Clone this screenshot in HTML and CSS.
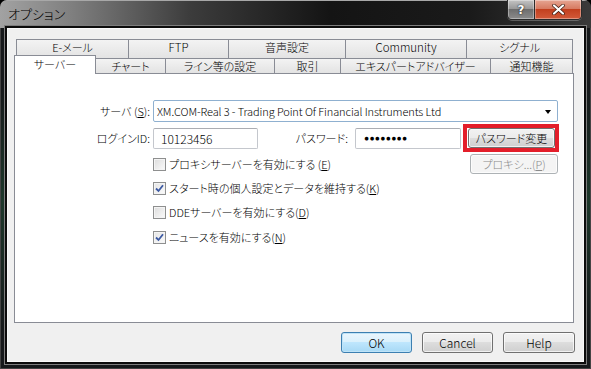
FILE: index.html
```html
<!DOCTYPE html>
<html lang="ja">

<head>
    <meta charset="UTF-8">
    <title>オプション</title>
    <link rel="stylesheet" href="styles.css">
</head>

<body>
    <div class="window">
        <div class="titlebar">
            <span class="title">オプション</span>
            <div class="caption">
                <div class="cap cap-help">?</div>
                <div class="cap cap-close">
                    <svg width="13" height="11" viewBox="0 0 13 11">
                        <path d="M2 1.5 L11 9.5 M11 1.5 L2 9.5" stroke="#3a1a10" stroke-width="3.6" stroke-linecap="round" />
                        <path d="M2 1.5 L11 9.5 M11 1.5 L2 9.5" stroke="#fff" stroke-width="2.2" stroke-linecap="round" />
                    </svg>
                </div>
            </div>
        </div>

        <div class="client">
            <div class="tabs">
                <div class="tab-row back">
                    <div class="tab" style="width:113px">E-メール</div>
                    <div class="tab latin" style="width:101px">FTP</div>
                    <div class="tab" style="width:118px">音声設定</div>
                    <div class="tab latin" style="width:122px">Community</div>
                    <div class="tab" style="width:107px">シグナル</div>
                </div>
                <div class="tab-row front">
                    <div class="tab selected" style="width:82px">サーバー</div>
                    <div class="tab" style="width:71px">チャート</div>
                    <div class="tab" style="width:110px">ライン等の設定</div>
                    <div class="tab" style="width:67px">取引</div>
                    <div class="tab" style="width:151px">エキスパートアドバイザー</div>
                    <div class="tab" style="width:83px">通知機能</div>
                </div>

                <div class="panel">
                    <div class="row row-server">
                        <label class="label-col">サーバ (<u>S</u>):</label>
                        <div class="combo">
                            <span class="server-name">XM.COM-Real 3 - Trading Point Of Financial Instruments Ltd</span>
                            <span class="arrow"></span>
                        </div>
                    </div>

                    <div class="row row-login">
                        <label class="label-col">ログインID:</label>
                        <div class="textbox login">10123456</div>
                        <label class="pw-label">パスワード:</label>
                        <div class="textbox password">●●●●●●●●</div>
                        <div class="highlight">
                            <button class="btn pw-btn">パスワード変更</button>
                        </div>
                    </div>

                    <div class="row check-row first">
                        <span class="checkbox"></span>
                        <span>プロキシサーバーを有効にする (<u>E</u>)</span>
                        <button class="btn proxy-btn" disabled>プロキシ...(<u>P</u>)</button>
                    </div>
                    <div class="row check-row">
                        <span class="checkbox checked">
                            <svg width="9" height="9" viewBox="0 0 9 9"><path d="M1 4.5 L3.5 7 L8 1.2" stroke="#3d5aa3" stroke-width="1.8" fill="none" /></svg>
                        </span>
                        <span>スタート時の個人設定とデータを維持する(<u>K</u>)</span>
                    </div>
                    <div class="row check-row">
                        <span class="checkbox"></span>
                        <span>DDEサーバーを有効にする(<u>D</u>)</span>
                    </div>
                    <div class="row check-row last">
                        <span class="checkbox checked">
                            <svg width="9" height="9" viewBox="0 0 9 9"><path d="M1 4.5 L3.5 7 L8 1.2" stroke="#3d5aa3" stroke-width="1.8" fill="none" /></svg>
                        </span>
                        <span>ニュースを有効にする(<u>N</u>)</span>
                    </div>
                </div>
            </div>

            <div class="dialog-buttons">
                <button class="btn default">OK</button>
                <button class="btn">Cancel</button>
                <button class="btn help">Help</button>
            </div>
        </div>
    </div>
</body>

</html>
```

FILE: styles.css
```css
* {
    box-sizing: border-box;
}

body {
    margin: 0;
    background: #000;
    font-family: "Noto Sans CJK JP", sans-serif;
    font-size: 11px;
    font-weight: 300;
    color: #000;
    font-feature-settings: "palt";
}

.latin {
    font-size: 11.5px;
}

.window {
    width: 591px;
    height: 369px;
    border-radius: 7px 7px 0 0;
    overflow: hidden;
    background:
        linear-gradient(180deg, rgba(40, 90, 60, 0) 90px, rgba(40, 110, 70, 0.35) 200px, rgba(40, 90, 60, 0) 330px),
        #16191b;
    box-shadow: inset 0 0 0 1px #444;
}

/* barre de titre */
.titlebar {
    height: 28px;
    display: flex;
    justify-content: space-between;
    padding: 0 9px 0 8px;
    background: linear-gradient(90deg, #a2a2a2 0, #808080 70px, #3c3c3c 190px, #141414 330px, #1a1a1a 470px, #3a3a3a 100%);
    border-top: 1px solid #a8a8a8;
}

.title {
    font-size: 13px;
    line-height: 26px;
    color: #000;
}

.caption {
    display: flex;
    height: 20px;
    margin-top: -1px;
    border: 1px solid #2a2a2a;
    border-top: none;
    border-radius: 0 0 5px 5px;
    overflow: hidden;
    box-shadow: 0 1px 0 rgba(255, 255, 255, 0.25);
}

.cap {
    display: flex;
    align-items: center;
    justify-content: center;
    box-shadow: inset 0 0 0 1px rgba(255, 255, 255, 0.35);
}

.cap-help {
    width: 27px;
    border-right: 1px solid #2a2a2a;
    background: linear-gradient(#c4c4c4 0, #9a9a9a 45%, #6e6e6e 50%, #8c8c8c 100%);
    color: #fff;
    font-family: "DejaVu Sans", sans-serif;
    font-weight: bold;
    font-size: 12px;
    text-shadow: 0 0 2px #222, 0 0 1px #222;
}

.cap-close {
    width: 46px;
    background: linear-gradient(#e6a592 0, #d77b62 45%, #c2401f 50%, #d25a3a 100%);
}

/* zone client */
.client {
    margin: 0 7px;
    height: 334px;
    background: #f0f0f0;
    border: 1px solid #fafafa;
    box-shadow: 0 0 0 2px #0c0c0c, 0 0 0 3px #7d7d7d;
    padding: 10px 0 0 6px;
}

.tabs {
    width: 560px;
}

.tab-row {
    display: flex;
}

.tab-row.back {
    height: 19px;
    padding-left: 2px;
}

.tab-row.front {
    position: relative;
    z-index: 2;
    height: 18px;
    margin-top: -3px;
    align-items: flex-end;
}

.tab {
    flex: none;
    border: 1px solid #898c95;
    border-bottom: none;
    margin-left: -1px;
    background: linear-gradient(#f3f3f3, #e3e3e3);
    text-align: center;
    white-space: nowrap;
}

.tab:first-child {
    margin-left: 0;
}

.back .tab {
    height: 19px;
    line-height: 15px;
}

.front .tab {
    height: 15px;
    line-height: 14px;
}

.front .tab.selected {
    height: 19px;
    margin-bottom: -1px;
    line-height: 17px;
    background: #fff;
}

.panel {
    position: relative;
    height: 250px;
    background: #fff;
    border: 1px solid #898c95;
    padding-top: 26px;
}

.row {
    display: flex;
    align-items: center;
}

.label-col {
    width: 135px;
    margin-right: 3px;
    text-align: right;
}

.row-server {
    height: 22px;
}

.combo {
    width: 405px;
    height: 22px;
    border: 1px solid #8fb0d0;
    border-radius: 2px;
    display: flex;
    align-items: center;
    justify-content: space-between;
    padding: 0 6px 0 3px;
}

.server-name {
    font-size: 11px;
    letter-spacing: -0.1px;
}

.arrow {
    width: 0;
    height: 0;
    border-left: 3.5px solid transparent;
    border-right: 3.5px solid transparent;
    border-top: 4px solid #000;
    margin-top: 1px;
}

.row-login {
    height: 28px;
    margin-top: 2px;
}

.textbox {
    height: 21px;
    border: 1px solid #c4c7cd;
    border-top-color: #abadb3;
    border-radius: 2px;
    display: flex;
    align-items: center;
}

.login {
    width: 105px;
    padding-left: 7px;
    font-size: 12px;
}

.pw-label {
    width: 90px;
    margin-right: 7px;
    text-align: right;
}

.password {
    width: 106px;
    padding-left: 8px;
    font-family: "DejaVu Sans", sans-serif;
    font-size: 8.5px;
    letter-spacing: 0.3px;
}

.highlight {
    width: 96px;
    height: 28px;
    margin-left: 2px;
    border: 4px solid #e31e2a;
    padding: 0 0 0 1px;
}

/* boutons style Windows 7 */
.btn {
    font-family: "Noto Sans CJK JP", sans-serif;
    font-size: 11px;
    font-weight: 300;
    color: #000;
    height: 21px;
    padding: 0;
    border: 1px solid #707070;
    border-radius: 3px;
    background: linear-gradient(#f2f2f2 0, #ebebeb 50%, #dddddd 50%, #cfcfcf 100%);
    box-shadow: inset 0 0 0 1px rgba(255, 255, 255, 0.7);
    font-feature-settings: "palt";
}

.pw-btn {
    width: 87px;
    height: 20px;
}

.proxy-btn {
    width: 88px;
    height: 20px;
    margin-left: auto;
    margin-right: 15px;
    border-color: #adb2b5;
    background: #f4f4f4;
    color: #8b8b8b;
}

.check-row {
    height: 20px;
    padding-left: 138px;
    margin-top: 4px;
}

.check-row.first {
    margin-top: 2px;
}

.check-row.last {
    margin-top: 5px;
}

.checkbox {
    width: 13px;
    height: 13px;
    margin-right: 3px;
    border: 1px solid #8e8f8f;
    background: linear-gradient(135deg, #dcdcdc, #fbfbfb);
    box-shadow: inset 0 0 0 1px #f4f4f4;
    display: flex;
    align-items: center;
    justify-content: center;
}

.checkbox.checked {
    background: linear-gradient(135deg, #e4e4e4, #fbfbfb);
}

.dialog-buttons {
    display: flex;
    justify-content: flex-end;
    gap: 10px;
    margin-top: 9px;
    padding-right: 8px;
}

.dialog-buttons .btn {
    width: 71px;
    font-size: 12px;
}

.dialog-buttons .help {
    width: 72px;
}

.btn.default {
    border-color: #3c7fb1;
    background: linear-gradient(#eaf6fd 0, #d9f0fc 50%, #bee6fd 50%, #a7d9f5 100%);
    box-shadow: inset 0 0 0 1px #bfe3f7;
}
```
